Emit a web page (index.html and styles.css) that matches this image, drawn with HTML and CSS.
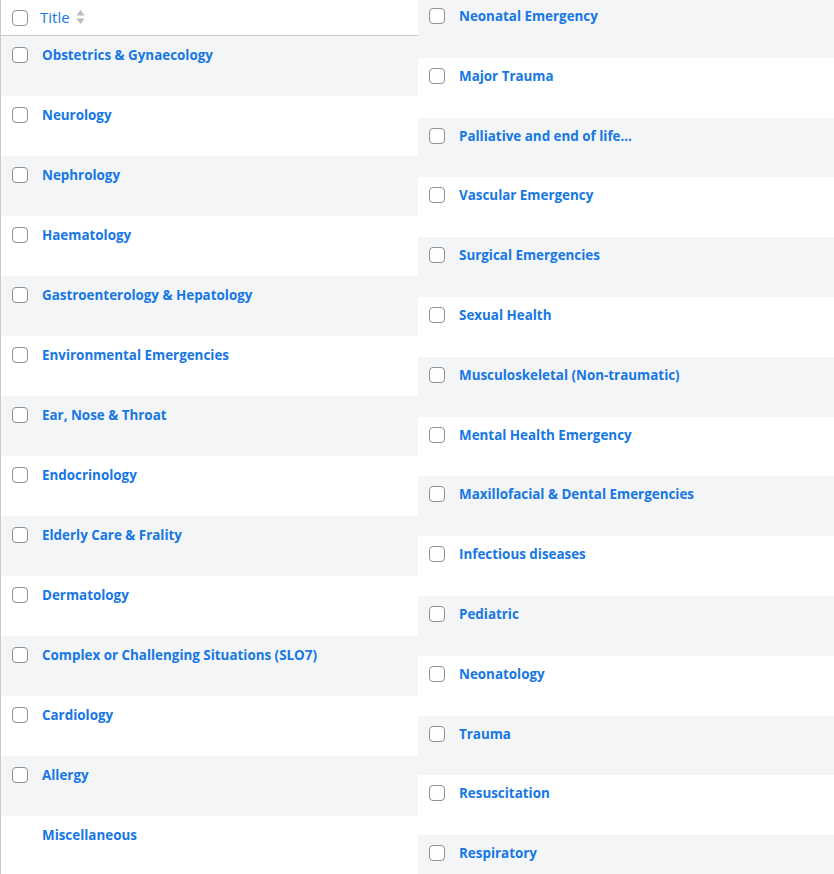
FILE: index.html
```html
<!DOCTYPE html>
<html lang="en">
<head>
  <meta charset="UTF-8" />
  <meta name="viewport" content="width=device-width, initial-scale=1.0"/>
  <title>Topics</title>
  <link rel="stylesheet" href="styles.css">
</head>
<body>
  <div class="topics">
    <div class="topics-col topics-left">
      <div class="topics-head">
        <span class="check"></span>
        <span class="head-title">Title</span>
        <svg class="sort-icon" width="9" height="16" viewBox="0 0 9 16">
          <path d="M4.5 1 L8.5 6.5 L0.5 6.5 Z" fill="#b9bcc0"/>
          <path d="M4.5 15 L8.5 9.5 L0.5 9.5 Z" fill="#b9bcc0"/>
        </svg>
      </div>
      <div class="topic-row"><span class="check"></span><a class="topic-link">Obstetrics &amp; Gynaecology</a></div>
      <div class="topic-row"><span class="check"></span><a class="topic-link">Neurology</a></div>
      <div class="topic-row"><span class="check"></span><a class="topic-link">Nephrology</a></div>
      <div class="topic-row"><span class="check"></span><a class="topic-link">Haematology</a></div>
      <div class="topic-row"><span class="check"></span><a class="topic-link">Gastroenterology &amp; Hepatology</a></div>
      <div class="topic-row"><span class="check"></span><a class="topic-link">Environmental Emergencies</a></div>
      <div class="topic-row"><span class="check"></span><a class="topic-link">Ear, Nose &amp; Throat</a></div>
      <div class="topic-row"><span class="check"></span><a class="topic-link">Endocrinology</a></div>
      <div class="topic-row"><span class="check"></span><a class="topic-link">Elderly Care &amp; Frality</a></div>
      <div class="topic-row"><span class="check"></span><a class="topic-link">Dermatology</a></div>
      <div class="topic-row"><span class="check"></span><a class="topic-link">Complex or Challenging Situations (SLO7)</a></div>
      <div class="topic-row"><span class="check"></span><a class="topic-link">Cardiology</a></div>
      <div class="topic-row"><span class="check"></span><a class="topic-link">Allergy</a></div>
      <div class="topic-row"><span class="check check-empty"></span><a class="topic-link">Miscellaneous</a></div>
    </div>

    <div class="topics-col topics-right">
      <div class="topic-row"><span class="check"></span><a class="topic-link">Neonatal Emergency</a></div>
      <div class="topic-row"><span class="check"></span><a class="topic-link">Major Trauma</a></div>
      <div class="topic-row"><span class="check"></span><a class="topic-link">Palliative and end of life...</a></div>
      <div class="topic-row"><span class="check"></span><a class="topic-link">Vascular Emergency</a></div>
      <div class="topic-row"><span class="check"></span><a class="topic-link">Surgical Emergencies</a></div>
      <div class="topic-row"><span class="check"></span><a class="topic-link">Sexual Health</a></div>
      <div class="topic-row"><span class="check"></span><a class="topic-link">Musculoskeletal (Non-traumatic)</a></div>
      <div class="topic-row"><span class="check"></span><a class="topic-link">Mental Health Emergency</a></div>
      <div class="topic-row"><span class="check"></span><a class="topic-link">Maxillofacial &amp; Dental Emergencies</a></div>
      <div class="topic-row"><span class="check"></span><a class="topic-link">Infectious diseases</a></div>
      <div class="topic-row"><span class="check"></span><a class="topic-link">Pediatric</a></div>
      <div class="topic-row"><span class="check"></span><a class="topic-link">Neonatology</a></div>
      <div class="topic-row"><span class="check"></span><a class="topic-link">Trauma</a></div>
      <div class="topic-row"><span class="check"></span><a class="topic-link">Resuscitation</a></div>
      <div class="topic-row"><span class="check"></span><a class="topic-link">Respiratory</a></div>
    </div>
  </div>
</body>
</html>
```

FILE: styles.css
```css
body {
  font-family: 'Open Sans', 'Noto Sans', sans-serif;
  background-color: #ffffff;
  margin: 0;
  padding: 0;
  overflow: hidden;
}

.topics {
  display: flex;
  width: 834px;
  height: 874px;
  overflow: hidden;
}

.topics-col {
  display: flex;
  flex-direction: column;
  flex-shrink: 0;
}

.topics-left {
  width: 418px;
  border-left: 1px solid #c8cacc;
  box-sizing: border-box;
}

.topics-right {
  width: 416px;
  margin-top: -2px;
}

.topics-head {
  display: flex;
  align-items: center;
  height: 35px;
  padding-left: 11px;
  border-bottom: 1px solid #c9cbcd;
  flex-shrink: 0;
}

.head-title {
  color: #1a78e6;
  font-size: 15px;
  margin-left: 12px;
  margin-top: -2px;
}

.sort-icon {
  margin-left: 6px;
  margin-top: -1px;
}

.check {
  display: block;
  width: 14px;
  height: 14px;
  border: 1.5px solid #8e9194;
  border-radius: 4px;
  background-color: #ffffff;
  flex-shrink: 0;
}

.check-empty {
  visibility: hidden;
}

.topic-row {
  display: flex;
  align-items: flex-start;
  height: 60px;
  padding: 11px 0 0 11px;
  box-sizing: border-box;
  flex-shrink: 0;
}

.topics-right .topic-row {
  height: 59.8px;
  padding: 10px 0 0 11px;
}

.topic-row:nth-of-type(even) {
  background-color: #f4f5f6;
}

.topics-right .topic-row:nth-child(odd) {
  background-color: #f4f5f6;
}

.topics-right .topic-row:nth-child(even) {
  background-color: #ffffff;
}

.topic-link {
  color: #1677e6;
  font-size: 13.4px;
  font-weight: 700;
  margin-left: 14px;
  margin-top: -1px;
  line-height: 18px;
  cursor: pointer;
}
```
